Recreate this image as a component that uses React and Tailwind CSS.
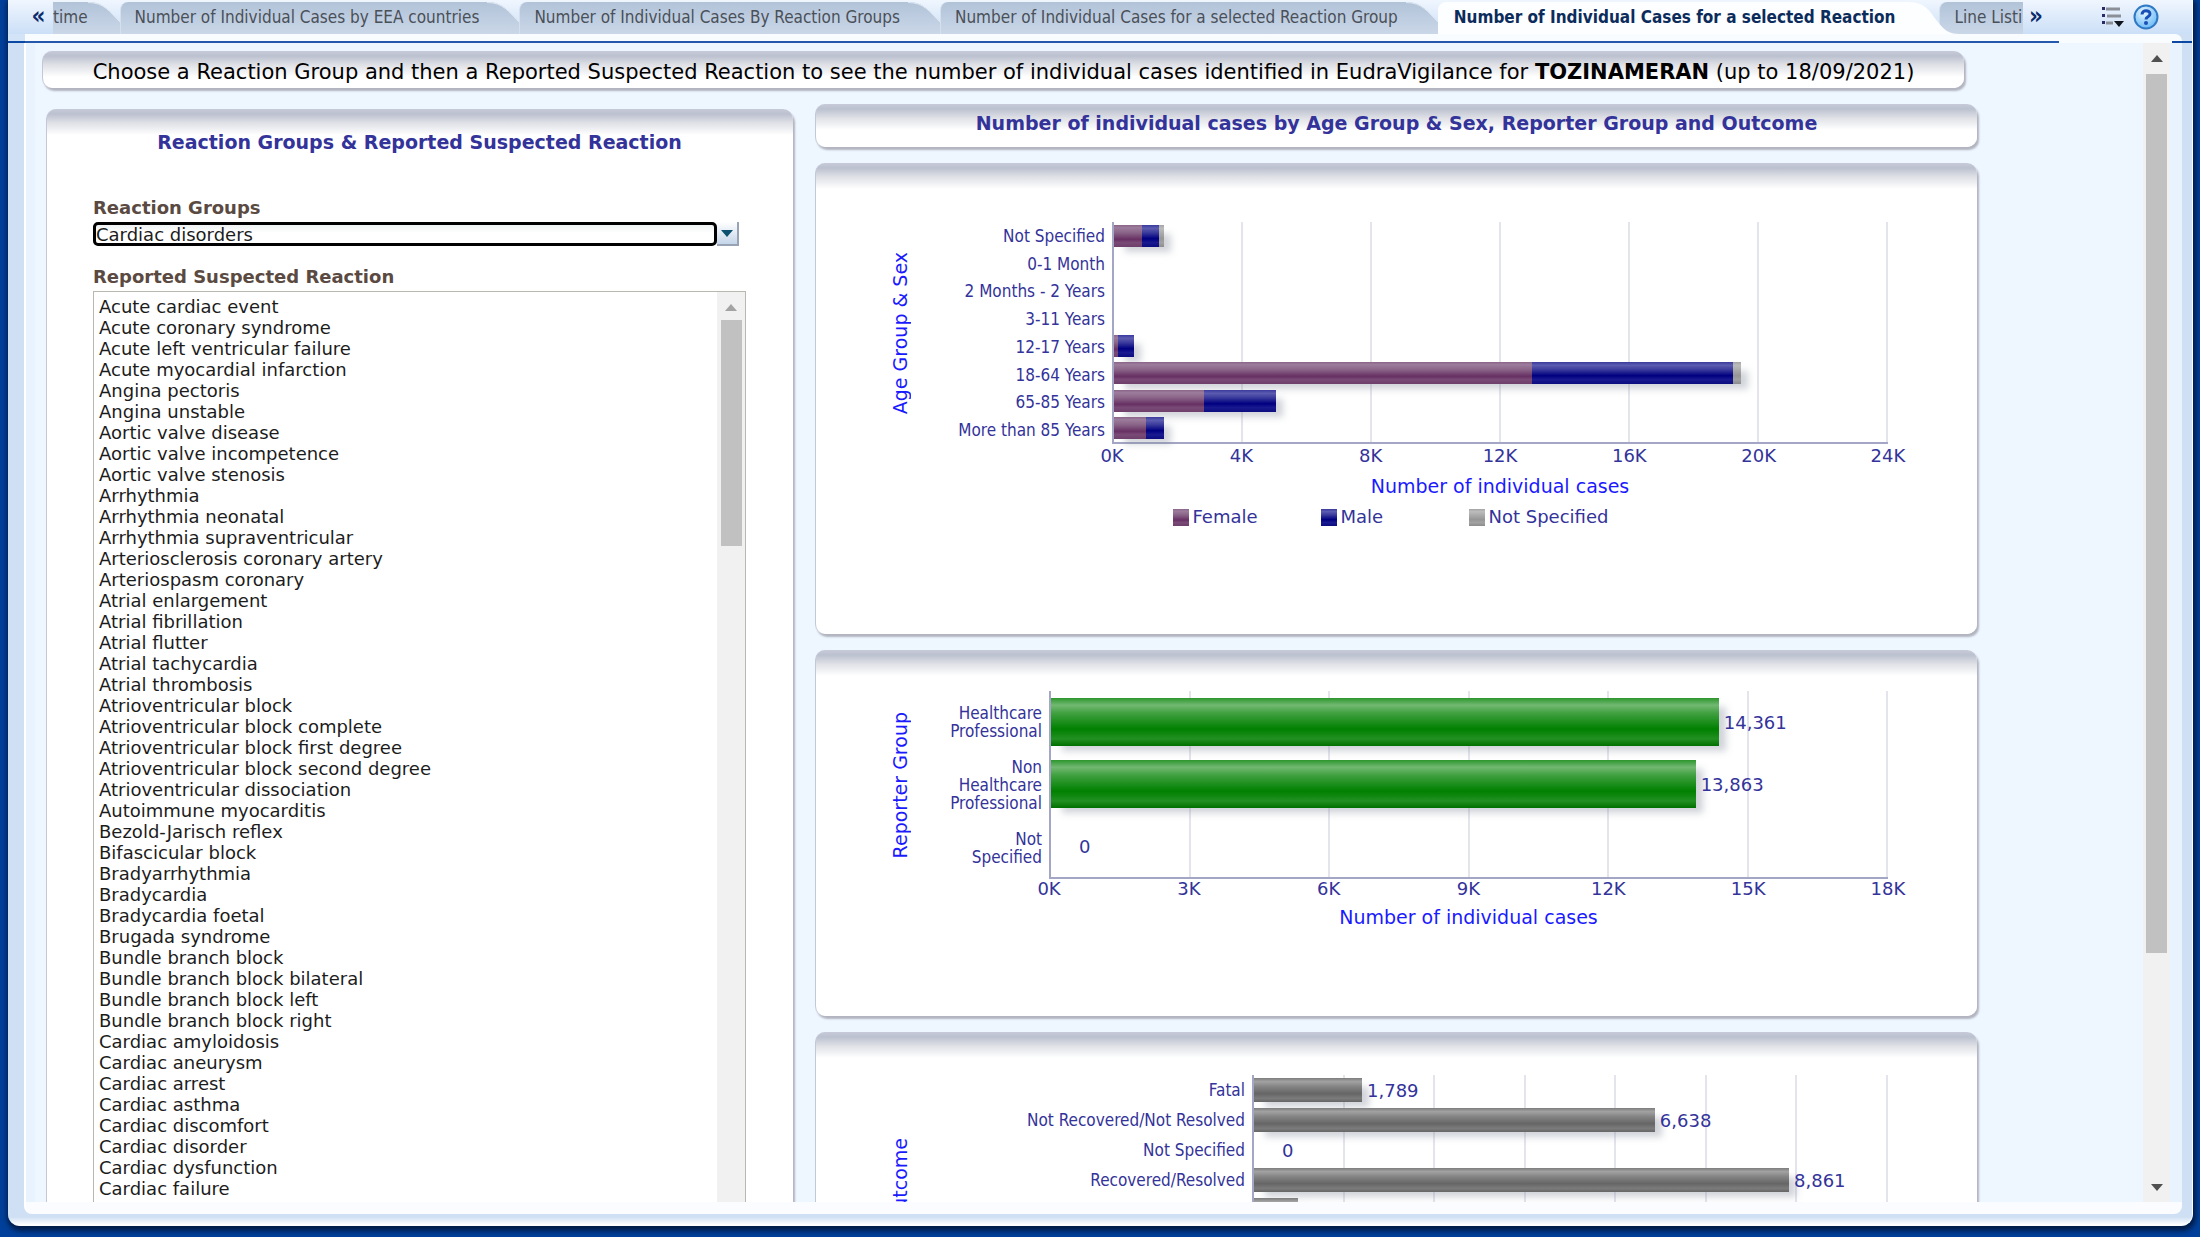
import React, { useState } from 'react';

const reactions = [
  'Acute cardiac event',
  'Acute coronary syndrome',
  'Acute left ventricular failure',
  'Acute myocardial infarction',
  'Angina pectoris',
  'Angina unstable',
  'Aortic valve disease',
  'Aortic valve incompetence',
  'Aortic valve stenosis',
  'Arrhythmia',
  'Arrhythmia neonatal',
  'Arrhythmia supraventricular',
  'Arteriosclerosis coronary artery',
  'Arteriospasm coronary',
  'Atrial enlargement',
  'Atrial fibrillation',
  'Atrial flutter',
  'Atrial tachycardia',
  'Atrial thrombosis',
  'Atrioventricular block',
  'Atrioventricular block complete',
  'Atrioventricular block first degree',
  'Atrioventricular block second degree',
  'Atrioventricular dissociation',
  'Autoimmune myocarditis',
  'Bezold-Jarisch reflex',
  'Bifascicular block',
  'Bradyarrhythmia',
  'Bradycardia',
  'Bradycardia foetal',
  'Brugada syndrome',
  'Bundle branch block',
  'Bundle branch block bilateral',
  'Bundle branch block left',
  'Bundle branch block right',
  'Cardiac amyloidosis',
  'Cardiac aneurysm',
  'Cardiac arrest',
  'Cardiac asthma',
  'Cardiac discomfort',
  'Cardiac disorder',
  'Cardiac dysfunction',
  'Cardiac failure',
  'Cardiac failure acute',
];

const fills = {
  female: 'bg-[linear-gradient(#8a6488,#9c7c9c_12%,#8a6488_35%,#673063_65%,#7a4a76_80%,#6f3f6c)]',
  male: 'bg-[linear-gradient(#3a3a9e,#5c5cb0_15%,#3a3a9c_35%,#000080_62%,#191990_80%,#0c0c80)]',
  unknown: 'bg-[linear-gradient(#a4a4a4,#bcbcbc_15%,#a8a8a8_40%,#969696_62%,#a2a2a2_80%,#8c8c8c)]',
  green: 'bg-[linear-gradient(#2d962d,#72b872_15%,#3fa03f_32%,#008000_65%,#229022_85%,#007000)]',
  grey: 'bg-[linear-gradient(#7c7c7c,#a2a2a2_15%,#858585_35%,#666_65%,#7b7b7b_85%,#666)]',
};

const ageRows = [
  { label: 'Not Specified', parts: [['female', 860], ['male', 540], ['unknown', 140]] },
  { label: '0-1 Month', parts: [] },
  { label: '2 Months - 2 Years', parts: [] },
  { label: '3-11 Years', parts: [] },
  { label: '12-17 Years', parts: [['female', 130], ['male', 500]] },
  { label: '18-64 Years', parts: [['female', 12970], ['male', 6230], ['unknown', 240]] },
  { label: '65-85 Years', parts: [['female', 2800], ['male', 2230]] },
  { label: 'More than 85 Years', parts: [['female', 1000], ['male', 540]] },
];

const reporterRows = [
  { label: 'Healthcare\nProfessional', value: '14,361', parts: [['green', 14361]] },
  { label: 'Non\nHealthcare\nProfessional', value: '13,863', parts: [['green', 13863]] },
  { label: 'Not\nSpecified', value: '0', parts: [] },
];

const outcomeRows = [
  { label: 'Fatal', value: '1,789', parts: [['grey', 1789]] },
  { label: 'Not Recovered/Not Resolved', value: '6,638', parts: [['grey', 6638]] },
  { label: 'Not Specified', value: '0', parts: [] },
  { label: 'Recovered/Resolved', value: '8,861', parts: [['grey', 8861]] },
  { label: '', parts: [['grey', 730]] },
];

function Panel({ className = '', children }) {
  return (
    <section
      className={`rounded-[10px] border-l border-[#c3c7d6] bg-white bg-[linear-gradient(#c6cad9,#bcc1d0_5px,#dfe1e6_14px,#fff_26px)] shadow-[2px_3px_2px_#b2b5bf] ${className}`}
    >
      {children}
    </section>
  );
}

function TabEnd({ active }) {
  if (active) {
    return (
      <svg className="relative z-10 -mr-5 h-8 w-14 shrink-0" viewBox="0 0 56 32" aria-hidden="true">
        <path d="M0 0H6C24 0 28 12 35 20C41 28 46 32 56 32H0Z" fill="#fcfeff" />
      </svg>
    );
  }
  return (
    <svg className="h-8 w-8 shrink-0" viewBox="0 0 32 32" aria-hidden="true">
      <defs>
        <linearGradient id="tabFill" x1="0" y1="0" x2="0" y2="1">
          <stop offset="0" stopColor="#b2c3d8" />
          <stop offset="1" stopColor="#cad7e8" />
        </linearGradient>
      </defs>
      <path d="M0 0C16 0 22 10 32 20V32H0Z" fill="url(#tabFill)" />
      <path d="M0 .5C16 .5 22 10 32 20" fill="none" stroke="#dfe8f2" strokeWidth="1" />
    </svg>
  );
}

function Tab({ active, children }) {
  return (
    <div className="flex h-8 shrink-0">
      <button
        type="button"
        className={
          active
            ? 'h-8 rounded-tl-lg bg-[#fcfeff] pr-2 pl-4 text-[17px] font-bold whitespace-nowrap text-[#0c2c5c]'
            : 'h-8 rounded-tl-lg border-l border-[#d5e0ed] bg-[linear-gradient(#b2c3d8,#cad7e8)] pr-2 pl-[14px] text-[17px] whitespace-nowrap text-[#4a5058]'
        }
      >
        {children}
      </button>
      <TabEnd active={active} />
    </div>
  );
}

function Header() {
  return (
    <header className="flex h-[34px] shrink-0 items-start bg-[linear-gradient(#f0f6fe,#cbdff7)] pt-[2px] font-['DejaVu_Sans_Condensed','Noto_Sans',sans-serif]">
      <button type="button" aria-label="Scroll tabs left" className="h-8 w-[45px] pb-1 pl-4 text-[24px] leading-none font-bold text-[#0a2a6c]">
        «
      </button>
      <nav className="flex h-8 min-w-0 max-w-[1970px] flex-1 overflow-hidden">
        <div className="flex h-8 shrink-0">
          <button type="button" className="h-8 bg-[linear-gradient(#b2c3d8,#cad7e8)] text-[17px] text-[#4a5058]">
            time
          </button>
          <TabEnd />
        </div>
        <Tab>Number of Individual Cases by EEA countries</Tab>
        <Tab>Number of Individual Cases By Reaction Groups</Tab>
        <Tab>Number of Individual Cases for a selected Reaction Group</Tab>
        <Tab active>Number of Individual Cases for a selected Reaction</Tab>
        <Tab>Line Listing</Tab>
      </nav>
      <button type="button" aria-label="Scroll tabs right" className="h-8 w-[26px] pb-1 text-[24px] leading-none font-bold text-[#0a2a6c]">
        »
      </button>
      <div className="ml-auto flex items-center gap-2 pt-[2px] pr-[33px]">
        <button type="button" aria-label="Page options">
          <svg width="24" height="22" viewBox="0 0 24 22">
            <g fill="#2a2a66">
              <rect x="1" y="1" width="3" height="3" />
              <rect x="1" y="8" width="3" height="3" />
              <rect x="1" y="15" width="3" height="3" />
            </g>
            <g stroke="#8b8f98" strokeWidth="3">
              <path d="M5 3H19M6 10H20M5 17H12" />
            </g>
            <path d="M13 15H23L18 21Z" fill="#10141c" />
          </svg>
        </button>
        <button type="button" aria-label="Help">
          <svg width="26" height="26" viewBox="0 0 26 26">
            <defs>
              <radialGradient id="helpFill" cx="0.4" cy="0.3" r="0.8">
                <stop offset="0" stopColor="#e8f6ff" />
                <stop offset="0.5" stopColor="#9fd4fb" />
                <stop offset="1" stopColor="#5fb4f4" />
              </radialGradient>
            </defs>
            <circle cx="13" cy="13" r="11.500" fill="url(#helpFill)" stroke="#2f78c4" strokeWidth="2" />
            <path d="M9 10.500C9 5.500 17 5.500 17 10C17 13 13 12.500 13 15.500" fill="none" stroke="#1a4fb8" strokeWidth="3" />
            <circle cx="13" cy="19" r="2" fill="#1a4fb8" />
          </svg>
        </button>
      </div>
    </header>
  );
}

function Chart({ rows, max, step, title, labelClass, heightClass, rowClass, barClass, tickClass }) {
  const ticks = [];
  for (let t = 0; t <= max; t += step) ticks.push(t);

  return (
    <div className="flex pr-[89px] pl-[72px]">
      <div className={`flex w-6 shrink-0 items-center justify-center ${heightClass}`}>
        <h3 className="rotate-180 text-[19px] leading-6 whitespace-nowrap text-[#1a1aff] [writing-mode:vertical-rl]">{title}</h3>
      </div>
      <div className={`flex shrink-0 flex-col ${labelClass} ${heightClass}`}>
        {rows.map((row) => (
          <div
            key={row.label}
            className={`flex shrink-0 items-center justify-end pr-[7px] text-right font-['DejaVu_Sans_Condensed','Noto_Sans',sans-serif] text-[17px] leading-[18px] whitespace-pre text-[#33339a] ${rowClass}`}
          >
            {row.label}
          </div>
        ))}
      </div>
      <div className="min-w-0 flex-1">
        <div className={`relative border-b-2 border-l-2 border-[#a3a6c4] ${heightClass}`}>
          <div className="absolute inset-0 flex">
            {ticks.slice(1).map((t) => (
              <div key={t} className="flex-1 border-r-2 border-[#e4e4ed]" />
            ))}
          </div>
          <div className="relative flex h-full flex-col">
            {rows.map((row) => (
              <div key={row.label} className={`flex shrink-0 items-center ${rowClass}`}>
                {row.parts.length > 0 && (
                  <div
                    className={`flex shrink-0 shadow-[9px_7px_7px_-2px_rgba(120,130,145,0.35)] ${barClass}`}
                    style={{ width: `${(row.parts.reduce((sum, p) => sum + p[1], 0) / max) * 100}%` }}
                  >
                    {row.parts.map(([kind, n]) => (
                      <div key={kind} className={fills[kind]} style={{ flex: `${n} 0 0` }} />
                    ))}
                  </div>
                )}
                {row.value && (
                  <span className={row.parts.length ? 'pl-[5px] text-[18px] text-[#33339a]' : 'pl-7 text-[18px] text-[#33339a]'}>
                    {row.value}
                  </span>
                )}
              </div>
            ))}
          </div>
        </div>
        <div className={`flex justify-between text-[18px] text-[#33339a] ${tickClass}`}>
          {ticks.map((t) => (
            <span key={t} className="flex w-0 justify-center">
              {t / 1000}K
            </span>
          ))}
        </div>
        <p className="pt-[6px] text-center text-[19px] leading-6 text-[#1a1aff]">Number of individual cases</p>
      </div>
    </div>
  );
}

function LegendItem({ fill, children }) {
  return (
    <li className="flex w-[148px] items-center gap-1 whitespace-nowrap">
      <span className={`h-[17px] w-4 ${fill}`} />
      {children}
    </li>
  );
}

function ReactionPanel() {
  const [group, setGroup] = useState('Cardiac disorders');

  return (
    <Panel className="mt-[5px] pr-[47px] pb-10 pl-[46px]">
      <h2 className="pt-[21px] text-center text-[19px] leading-6 font-bold whitespace-nowrap text-[#33339a]">
        Reaction Groups &amp; Reported Suspected Reaction
      </h2>
      <label htmlFor="reaction-group" className="mt-[42px] block text-[18px] leading-6 font-bold text-[#5a4a42]">
        Reaction Groups
      </label>
      <div className="mt-[2px] mr-[7px] flex h-6">
        <input
          id="reaction-group"
          type="text"
          value={group}
          onChange={(e) => setGroup(e.target.value)}
          className="h-6 min-w-0 flex-1 rounded-[5px] border-[3px] border-black bg-[linear-gradient(#eef2f2,#fff_8px)] text-[18px] leading-[18px] text-[#1c1c1c] outline-none"
        />
        <button
          type="button"
          aria-label="Open reaction groups"
          className="flex h-6 w-[22px] items-center justify-center border-r-2 border-b-2 border-[#98a3b4] bg-[linear-gradient(#fff,#c5d5ea)]"
        >
          <svg width="12" height="7" viewBox="0 0 12 7" aria-hidden="true">
            <path d="M0 0H12L6 7Z" fill="#0c5070" />
          </svg>
        </button>
      </div>
      <label htmlFor="reactions" className="mt-[19px] block text-[18px] leading-6 font-bold text-[#5a4a42]">
        Reported Suspected Reaction
      </label>
      <div className="mt-[2px] flex border border-[#b8b8b0]">
        <select
          id="reactions"
          size={44}
          className="h-[940px] min-w-0 flex-1 appearance-none overflow-hidden border-0 bg-white pt-1 pl-[3px] text-[18px] text-[#1c1c1c] outline-none"
        >
          {reactions.map((r) => (
            <option key={r} className="block h-[21px] min-h-0 p-0 px-[2px] leading-[21px]">
              {r}
            </option>
          ))}
        </select>
        <div className="flex w-7 flex-col items-center bg-[#f1f1f1]">
          <svg className="mt-3 mb-[9px]" width="12" height="7" viewBox="0 0 12 7" aria-hidden="true">
            <path d="M0 7H12L6 0Z" fill="#a3a3a3" />
          </svg>
          <div className="h-[226px] w-[21px] bg-[#c1c1c1]" />
        </div>
      </div>
    </Panel>
  );
}

function Charts() {
  return (
    <div className="flex flex-col gap-4">
      <Panel className="h-[43px]">
        <h2 className="pt-[7px] text-center text-[19px] leading-6 font-bold whitespace-nowrap text-[#33339a]">
          Number of individual cases by Age Group &amp; Sex, Reporter Group and Outcome
        </h2>
      </Panel>
      <Panel className="h-[471px] pt-[59px]">
        <Chart
          rows={ageRows}
          max={24000}
          step={4000}
          title="Age Group & Sex"
          labelClass="w-[200px]"
          heightClass="h-[222px]"
          rowClass="h-[12.5%]"
          barClass="h-[22px]"
          tickClass="leading-6"
        />
        <ul className="flex justify-center pt-[7px] pr-1 text-[18px] leading-6 text-[#33339a]">
          <LegendItem fill={fills.female}>Female</LegendItem>
          <LegendItem fill={fills.male}>Male</LegendItem>
          <LegendItem fill={fills.unknown}>Not Specified</LegendItem>
        </ul>
      </Panel>
      <Panel className="h-[366px] pt-[41px]">
        <Chart
          rows={reporterRows}
          max={18000}
          step={3000}
          title="Reporter Group"
          labelClass="w-[137px]"
          heightClass="h-[188px]"
          rowClass="h-1/3"
          barClass="h-12"
          tickClass="leading-5"
        />
      </Panel>
      <Panel className="h-[366px] pt-[43px]">
        <Chart
          rows={outcomeRows}
          max={10500}
          step={1500}
          title="Outcome"
          labelClass="w-[340px]"
          heightClass="h-[212px]"
          rowClass="h-[30px]"
          barClass="h-6"
          tickClass="leading-5"
        />
      </Panel>
    </div>
  );
}

function PageScrollbar() {
  return (
    <div className="flex w-[27px] shrink-0 flex-col items-center bg-[#f1f1f1]">
      <svg className="mt-3 mb-3" width="12" height="7" viewBox="0 0 12 7" aria-hidden="true">
        <path d="M0 7H12L6 0Z" fill="#505050" />
      </svg>
      <div className="min-h-0 w-[21px] flex-[874] bg-[#c1c1c1]" />
      <div className="min-h-0 flex-[230]" />
      <svg className="mb-[11px]" width="12" height="7" viewBox="0 0 12 7" aria-hidden="true">
        <path d="M0 0H12L6 7Z" fill="#505050" />
      </svg>
    </div>
  );
}

export default function App() {
  return (
    <div className="h-screen overflow-hidden bg-[#00409a] pr-[7px] pb-[11px] pl-2 font-['DejaVu_Sans',sans-serif]">
      <div className="flex h-full flex-col overflow-hidden rounded-b-xl border-r border-b border-white bg-[linear-gradient(#cfe0f4,#cfe0f4_calc(100%-8px),#fff)] shadow-[1px_3px_5px_2px_#001c48]">
        <Header />
        <div className="flex h-[9px] shrink-0">
          <div className="w-[17px] border-b-2 border-[#0a48a4] bg-[#d4e4f8]" />
          <div className="flex-1 border-b-2 border-[#2458ac] bg-[#f9fcff]" />
          <div className="w-[113px] bg-[#f9fcff]" />
          <div className="w-5 border-b-2 border-[#0a48a4]">
            <div className="h-[7px] w-[10px] rounded-tr-lg bg-[#f9fcff]" />
          </div>
        </div>
        <div className="mr-[10px] mb-[11px] ml-4 flex min-h-0 flex-1 flex-col overflow-hidden rounded-b-lg border-l-2 border-white bg-[#fbfcff]">
          <main className="flex min-h-0 flex-1 overflow-hidden bg-[#e8f3fe] pr-3">
            <div className="ml-[9px] min-w-0 flex-1 overflow-hidden bg-[#eef6ff] pl-[7px]">
              <Panel className="mt-2 mr-[179px] h-[37px]">
                <p className="text-center text-[21px] leading-[42px] whitespace-nowrap text-black">
                  Choose a Reaction Group and then a Reported Suspected Reaction to see the number of individual cases identified in
                  EudraVigilance for <b>TOZINAMERAN</b> (up to 18/09/2021)
                </p>
              </Panel>
              <div className="mt-4 mr-[166px] ml-1 grid grid-cols-[9fr_14fr] items-start gap-[22px]">
                <ReactionPanel />
                <Charts />
              </div>
            </div>
            <PageScrollbar />
          </main>
          <div className="h-3 shrink-0" />
        </div>
      </div>
    </div>
  );
}
